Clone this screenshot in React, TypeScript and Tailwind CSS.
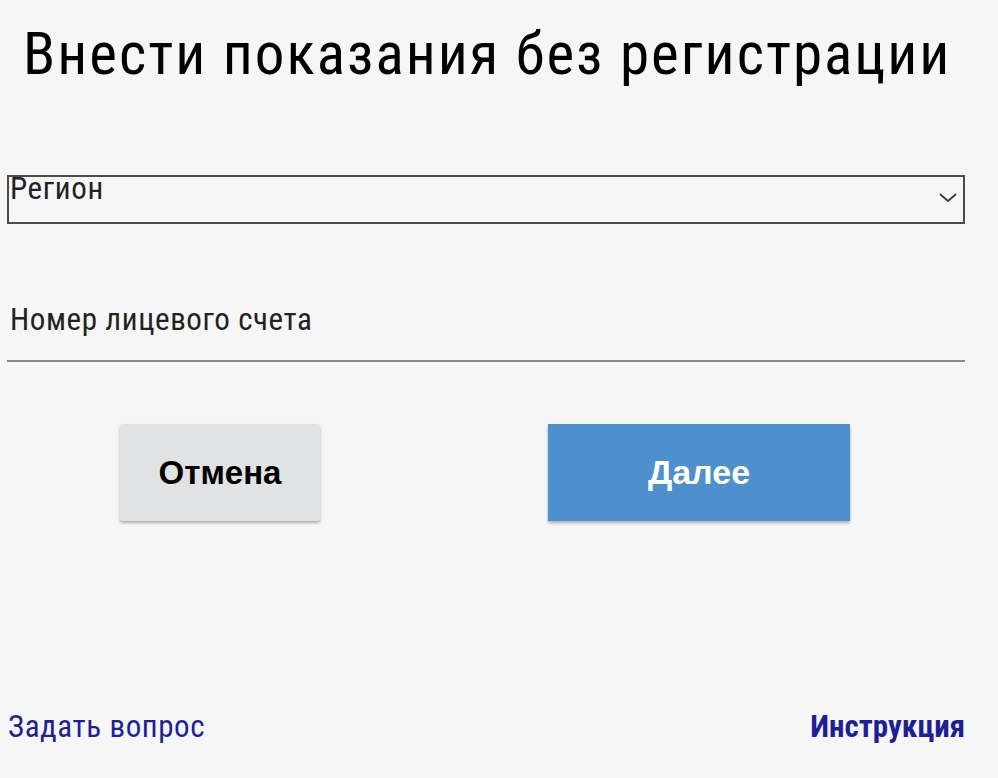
const narrow = "font-['Liberation_Sans_Narrow','Roboto_Condensed',Roboto,sans-serif]";

function Chevron() {
  return (
    <svg width="18" height="10" viewBox="0 0 18 10" className="mt-[16px] mr-[6px]" fill="none">
      <polyline points="1.5,1.5 9,8 16.5,1.5" stroke="#3c3c3c" strokeWidth="1.8" strokeLinecap="round" strokeLinejoin="round" />
    </svg>
  );
}

export default function App() {
  return (
    <div className="w-[998px] h-[778px] bg-[#f6f6f6] flex flex-col px-[7px] text-black">
      <h1 className={`${narrow} text-[59px] leading-none mt-[24px] ml-[16px] tracking-[2px]`}>
        Внести показания без регистрации
      </h1>

      {/* region select */}
      <div className="mt-[92px] w-[958px] h-[49px] border-2 border-[#4b4b4b] flex items-start justify-between">
        <span className={`${narrow} text-[31px] leading-none tracking-[0.6px] text-[#222] ml-[1px] -mt-[4px]`}>Регион</span>
        <Chevron />
      </div>

      {/* account number */}
      <div className="mt-[80px] w-[958px] border-b-2 border-[#8a8a8a] pb-[24px]">
        <span className={`${narrow} text-[31px] leading-none tracking-[0.6px] text-[#222] ml-[3px]`}>Номер лицевого счета</span>
      </div>

      <div className="mt-[62px] flex">
        <button className="ml-[113px] w-[200px] h-[97px] bg-[#e1e2e4] rounded-[3px] shadow-[0_2px_3px_rgba(0,0,0,0.3)] font-['Liberation_Sans',Arial,sans-serif] font-bold text-[33px] text-black">
          Отмена
        </button>
        <button className="ml-[228px] w-[302px] h-[97px] bg-[#4e8fcd] shadow-[0_2px_3px_rgba(0,0,0,0.3)] font-['Liberation_Sans',Arial,sans-serif] font-bold text-[34px] text-white">
          Далее
        </button>
      </div>

      <div className="flex-1" />

      <div className={`${narrow} flex justify-between items-end w-[958px] pb-[36px] text-[31px] leading-none text-[#1e1e96]`}>
        <a className="ml-[1px] tracking-[0.6px]">Задать вопрос</a>
        <a className="font-bold">Инструкция</a>
      </div>
    </div>
  );
}
